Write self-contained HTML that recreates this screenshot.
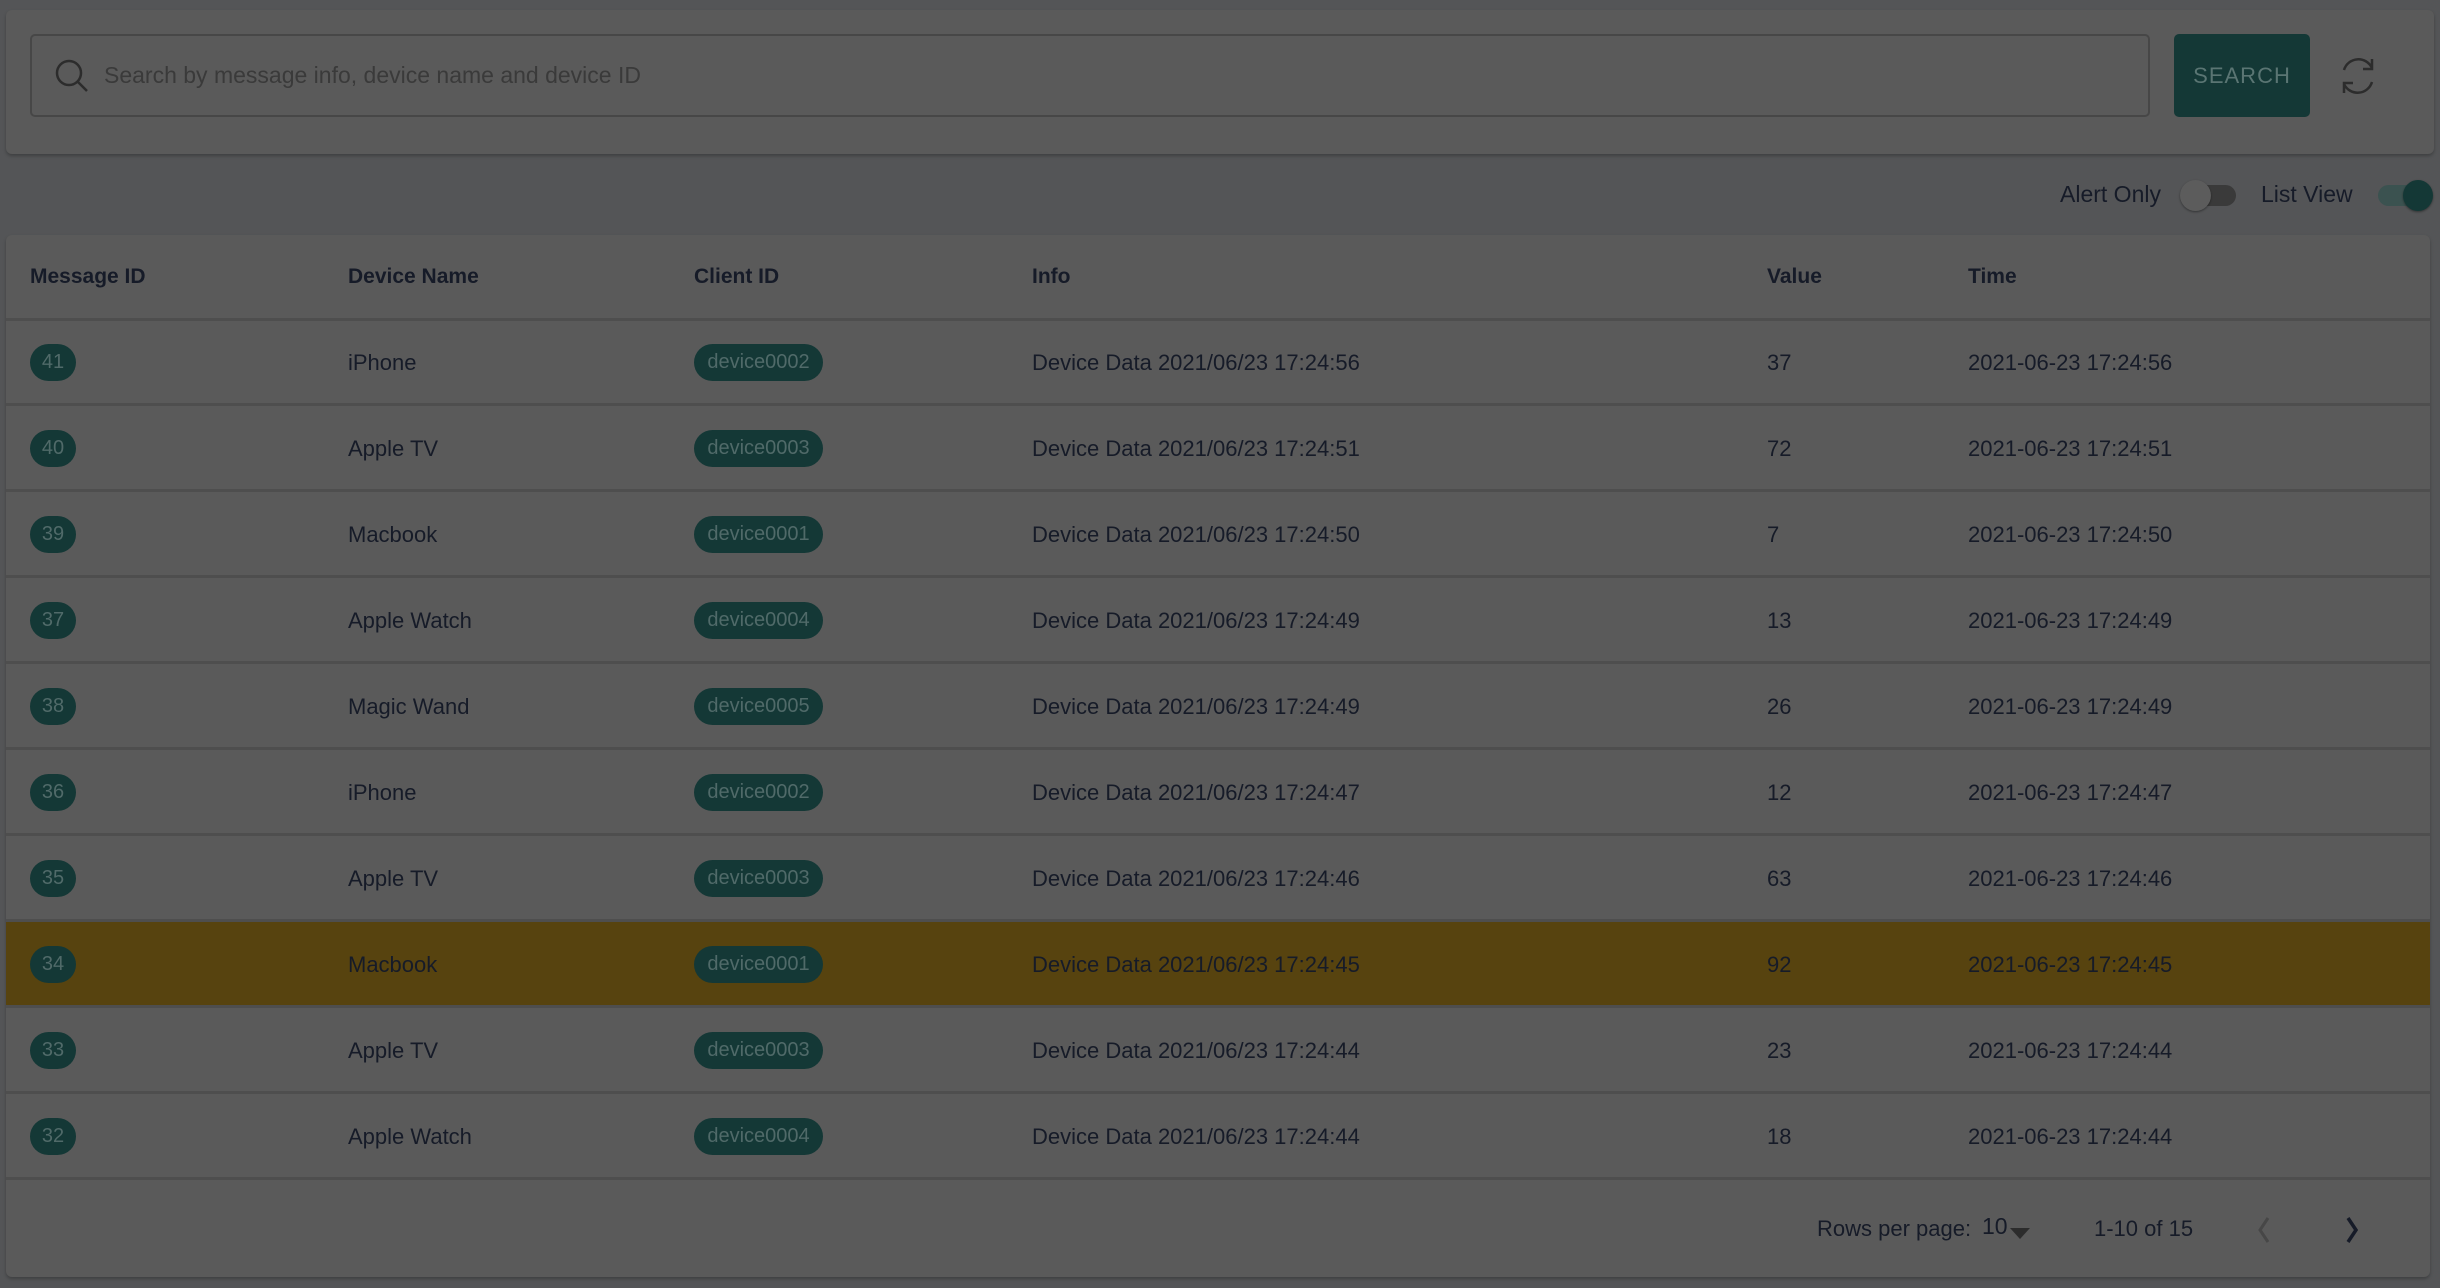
<!DOCTYPE html>
<html><head><meta charset="utf-8"><style>
*{box-sizing:border-box;margin:0;padding:0}
body{width:2440px;height:1288px;background:#545557;font-family:"Liberation Sans",sans-serif;color:#161b28;position:relative;overflow:hidden}
.card{position:absolute;background:#5a5a5a;border-radius:6px;box-shadow:0 2px 3px rgba(0,0,0,.25)}
.search{position:absolute;left:30px;top:34px;width:2120px;height:83px;border:2px solid #474747;border-radius:5px}
.search span{position:absolute;left:72px;top:26px;font-size:23px;color:#3a3a3a}
.btn{position:absolute;left:2174px;top:34px;width:136px;height:83px;background:#143836;border-radius:5px;color:#5a7573;font-size:22px;text-align:center;line-height:83px;letter-spacing:1px}
.lbl{position:absolute;font-size:23px;color:#161b28;top:181px}
.row{position:absolute;left:6px;width:2424px;height:86px;border-bottom:3px solid #4e4e4e}
.c{position:absolute;top:1px;line-height:84px;font-size:22px}
.h .c{font-weight:bold;font-size:21px;top:0}
.badge{position:absolute;left:24px;top:24px;width:46px;height:37px;border-radius:19px;background:#143836;color:#506a69;font-size:20px;text-align:center;line-height:37px}
.chip{position:absolute;left:688px;top:24px;width:129px;height:37px;border-radius:19px;background:#143836;color:#506a69;font-size:20px;text-align:center;line-height:37px}
</style></head><body>
<div class="card" style="left:6px;top:10px;width:2428px;height:144px"></div>
<div class="search">
<svg style="position:absolute;left:22px;top:22px" width="36" height="36" viewBox="0 0 36 36"><circle cx="15" cy="15" r="12" fill="none" stroke="#2c2c2c" stroke-width="2.5"/><line x1="24" y1="24" x2="33" y2="33" stroke="#2c2c2c" stroke-width="2.5"/></svg>
<span>Search by message info, device name and device ID</span></div>
<div class="btn">SEARCH</div>
<svg style="position:absolute;left:2336px;top:55px" width="44" height="42" viewBox="0 0 44 42"><path d="M8 15 A15 15 0 0 1 36 13" fill="none" stroke="#2c2c2c" stroke-width="2.5"/><path d="M36 4 V14 H27" fill="none" stroke="#2c2c2c" stroke-width="2.5"/><path d="M36 27 A15 15 0 0 1 8 29" fill="none" stroke="#2c2c2c" stroke-width="2.5"/><path d="M8 38 V28 H17" fill="none" stroke="#2c2c2c" stroke-width="2.5"/></svg>
<div class="lbl" style="left:2060px">Alert Only</div>
<div style="position:absolute;left:2182px;top:185px;width:54px;height:21px;border-radius:11px;background:#3a3a3a"></div>
<div style="position:absolute;left:2180px;top:180px;width:31px;height:31px;border-radius:50%;background:#5c5c5c;box-shadow:0 1px 2px rgba(0,0,0,.4)"></div>
<div class="lbl" style="left:2261px">List View</div>
<div style="position:absolute;left:2378px;top:185px;width:52px;height:21px;border-radius:11px;background:#3b5250"></div>
<div style="position:absolute;left:2403px;top:180px;width:30px;height:31px;border-radius:50%;background:#143836;box-shadow:0 1px 2px rgba(0,0,0,.4)"></div>
<div class="card" style="left:6px;top:235px;width:2424px;height:1042px"></div>
<div class="row h" style="top:235px">
<div class="c" style="left:24px">Message ID</div><div class="c" style="left:342px">Device Name</div><div class="c" style="left:688px">Client ID</div><div class="c" style="left:1026px">Info</div><div class="c" style="left:1761px">Value</div><div class="c" style="left:1962px">Time</div></div>
<div class="row" style="top:320px"><div class="badge">41</div><div class="c" style="left:342px">iPhone</div><div class="chip">device0002</div><div class="c" style="left:1026px">Device Data 2021/06/23 17:24:56</div><div class="c" style="left:1761px">37</div><div class="c" style="left:1962px">2021-06-23 17:24:56</div></div>
<div class="row" style="top:406px"><div class="badge">40</div><div class="c" style="left:342px">Apple TV</div><div class="chip">device0003</div><div class="c" style="left:1026px">Device Data 2021/06/23 17:24:51</div><div class="c" style="left:1761px">72</div><div class="c" style="left:1962px">2021-06-23 17:24:51</div></div>
<div class="row" style="top:492px"><div class="badge">39</div><div class="c" style="left:342px">Macbook</div><div class="chip">device0001</div><div class="c" style="left:1026px">Device Data 2021/06/23 17:24:50</div><div class="c" style="left:1761px">7</div><div class="c" style="left:1962px">2021-06-23 17:24:50</div></div>
<div class="row" style="top:578px"><div class="badge">37</div><div class="c" style="left:342px">Apple Watch</div><div class="chip">device0004</div><div class="c" style="left:1026px">Device Data 2021/06/23 17:24:49</div><div class="c" style="left:1761px">13</div><div class="c" style="left:1962px">2021-06-23 17:24:49</div></div>
<div class="row" style="top:664px"><div class="badge">38</div><div class="c" style="left:342px">Magic Wand</div><div class="chip">device0005</div><div class="c" style="left:1026px">Device Data 2021/06/23 17:24:49</div><div class="c" style="left:1761px">26</div><div class="c" style="left:1962px">2021-06-23 17:24:49</div></div>
<div class="row" style="top:750px"><div class="badge">36</div><div class="c" style="left:342px">iPhone</div><div class="chip">device0002</div><div class="c" style="left:1026px">Device Data 2021/06/23 17:24:47</div><div class="c" style="left:1761px">12</div><div class="c" style="left:1962px">2021-06-23 17:24:47</div></div>
<div class="row" style="top:836px"><div class="badge">35</div><div class="c" style="left:342px">Apple TV</div><div class="chip">device0003</div><div class="c" style="left:1026px">Device Data 2021/06/23 17:24:46</div><div class="c" style="left:1761px">63</div><div class="c" style="left:1962px">2021-06-23 17:24:46</div></div>
<div class="row" style="top:922px;background:#57430f"><div class="badge">34</div><div class="c" style="left:342px">Macbook</div><div class="chip">device0001</div><div class="c" style="left:1026px">Device Data 2021/06/23 17:24:45</div><div class="c" style="left:1761px">92</div><div class="c" style="left:1962px">2021-06-23 17:24:45</div></div>
<div class="row" style="top:1008px"><div class="badge">33</div><div class="c" style="left:342px">Apple TV</div><div class="chip">device0003</div><div class="c" style="left:1026px">Device Data 2021/06/23 17:24:44</div><div class="c" style="left:1761px">23</div><div class="c" style="left:1962px">2021-06-23 17:24:44</div></div>
<div class="row" style="top:1094px"><div class="badge">32</div><div class="c" style="left:342px">Apple Watch</div><div class="chip">device0004</div><div class="c" style="left:1026px">Device Data 2021/06/23 17:24:44</div><div class="c" style="left:1761px">18</div><div class="c" style="left:1962px">2021-06-23 17:24:44</div></div>
<div style="position:absolute;left:1817px;top:1216px;font-size:22px">Rows per page:</div>
<div style="position:absolute;left:1982px;top:1213px;font-size:23px">10</div>
<svg style="position:absolute;left:2010px;top:1228px" width="20" height="12"><path d="M0 0 H20 L10 11 Z" fill="#2c2c2c"/></svg>
<div style="position:absolute;left:2094px;top:1216px;font-size:22px">1-10 of 15</div>
<svg style="position:absolute;left:2256px;top:1216px" width="16" height="28"><path d="M12 2 L4 14 L12 26" fill="none" stroke="#474747" stroke-width="3"/></svg>
<svg style="position:absolute;left:2344px;top:1216px" width="16" height="28"><path d="M4 2 L12 14 L4 26" fill="none" stroke="#161b28" stroke-width="3.5"/></svg>
</body></html>
